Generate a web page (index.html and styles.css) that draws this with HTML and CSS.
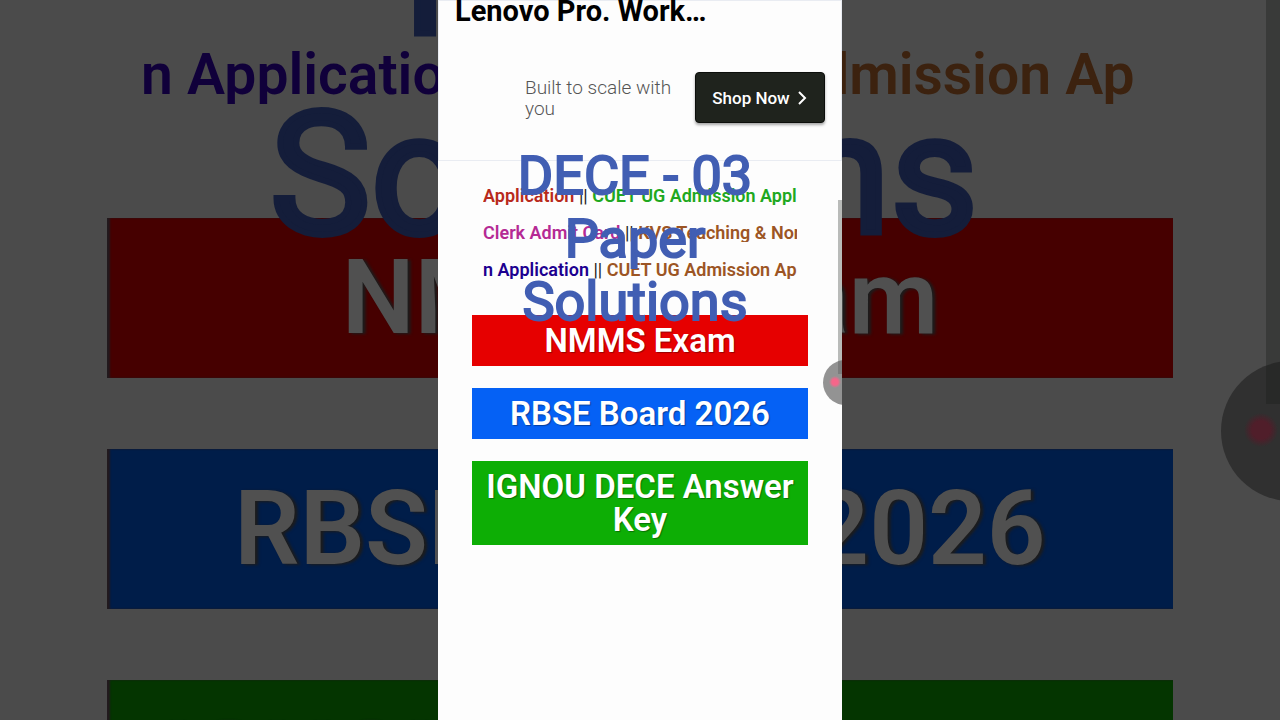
FILE: index.html
```
<!DOCTYPE html>
<html lang="en">
<head>
  <meta charset="UTF-8" />
  <meta name="viewport" content="width=device-width, initial-scale=1.0" />
  <title>DECE - 03 Paper Solutions</title>
  <link rel="stylesheet" href="styles.css">
</head>
<body>

  <!-- Dimmed enlarged backdrop -->
  <div class="backdrop" aria-hidden="true">
    <div class="big-ticker"><span class="navy">n Application</span> || <span class="brown">CUET UG Admission Ap</span></div>
    <div class="big-list">
      <div class="big-item red">NMMS Exam</div>
      <div class="big-item blue">RBSE Board 2026</div>
      <div class="big-item green">IGNOU DECE Answer Key</div>
    </div>
    <div class="big-caption">Paper<br>Solutions</div>
    <div class="big-scroll"></div>
    <div class="big-bubble"></div>
  </div>

  <!-- Phone screen -->
  <main class="phone">
    <section class="ad">
      <h2>Lenovo Pro. Work…</h2>
      <div class="ad-row">
        <p>Built to scale with you</p>
        <button class="shop-btn" type="button">Shop Now
          <svg width="10" height="16" viewBox="0 0 10 16" fill="none" stroke="#fff" stroke-width="2"><path d="M1 2l6 6-6 6" /></svg>
        </button>
      </div>
    </section>

    <section class="tickers">
      <div class="ticker"><a href="#" class="crimson">Application</a> || <a href="#" class="lime">CUET UG Admission Appl</a></div>
      <div class="ticker"><a href="#" class="magenta">Clerk Admit Card</a> || <a href="#" class="brown">KVS Teaching &amp; Non</a></div>
      <div class="ticker"><a href="#" class="navy">n Application</a> || <a href="#" class="brown">CUET UG Admission Ap</a></div>
    </section>

    <nav class="links">
      <a href="#" class="link red">NMMS Exam</a>
      <a href="#" class="link blue">RBSE Board 2026</a>
      <a href="#" class="link green">IGNOU DECE Answer Key</a>
    </nav>

    <h1 class="caption">DECE - 03<br>Paper<br>Solutions</h1>
    <div class="scroll"></div>
    <div class="bubble"></div>
  </main>

</body>
</html>
```
FILE: styles.css
```
* {
  box-sizing: border-box;
}

body {
  margin: 0;
  height: 100vh;
  overflow: hidden;
  position: relative;
  background: #4b4b4b;
  font-family: Roboto, "Liberation Sans", sans-serif;
  display: flex;
  justify-content: center;
}

a {
  color: inherit;
  text-decoration: none;
}

/* Backdrop */
.backdrop {
  position: absolute;
  inset: 0;
  overflow: hidden;
  padding-top: 46px;
}

.big-ticker {
  margin: 0 141px;
  font-size: 57px;
  line-height: 58px;
  font-weight: 600;
  white-space: nowrap;
  overflow: hidden;
}
.backdrop .navy { color: #10003a; }
.backdrop .brown { color: #3c220f; }

.big-list {
  margin: 114px 107px 0;
  display: flex;
  flex-direction: column;
  gap: 71px;
}

.big-item {
  padding: 28px 24px;
  color: #505050;
  font-size: 103px;
  line-height: 104px;
  font-weight: 600;
  text-align: center;
  text-shadow: 3px 1px 3px #1c1c1c;
  box-shadow: inset 3px 0 2px #221a1e;
}
.big-item.red { background: #460000; }
.big-item.blue { background: #001d49; }
.big-item.green { background: #043500; }

.big-caption {
  position: absolute;
  top: -123px;
  left: 0;
  right: 32px;
  color: #141d3a;
  font-size: 170px;
  line-height: 199px;
  font-weight: 400;
  text-align: center;
  -webkit-text-stroke: 6px #141d3a;
}

.big-scroll {
  position: absolute;
  top: 0;
  right: 0;
  width: 14px;
  height: 404px;
  background: #393a39;
}

.big-bubble {
  position: absolute;
  top: 361px;
  right: -81px;
  width: 140px;
  height: 140px;
  border-radius: 50%;
  background: radial-gradient(circle at 40px 69px, #501e2a 9px, rgba(80, 30, 42, 0) 17px), rgba(30, 30, 30, 0.6);
}

/* Phone screen */
.phone {
  position: relative;
  width: 404px;
  height: 100%;
  background: #fdfdfd;
  overflow: hidden;
}

.ad {
  border: 1px solid #e9ecf2;
}
.ad h2 {
  margin: 0 16px;
  font-size: 29px;
  line-height: 20px;
  font-weight: 700;
  color: #000;
}

.ad-row {
  display: flex;
  align-items: center;
  justify-content: space-between;
  padding: 51px 16px 37px 86px;
}
.ad-row p {
  margin: 0;
  width: 160px;
  font-size: 19px;
  line-height: 21px;
  font-weight: 300;
  color: #555;
}

.shop-btn {
  display: flex;
  align-items: center;
  justify-content: center;
  gap: 8px;
  width: 130px;
  height: 51px;
  padding: 0;
  border: 1px solid #0c0e0b;
  border-radius: 4px;
  background: #1f231d;
  color: #fff;
  font-family: inherit;
  font-size: 17px;
  font-weight: 500;
  box-shadow: 0 2px 3px rgba(0, 0, 0, 0.35);
  cursor: pointer;
}

.tickers {
  display: flex;
  flex-direction: column;
  gap: 19px;
  padding: 26px 45px 36px;
}
.ticker {
  font-size: 18px;
  line-height: 18px;
  color: #222;
  white-space: nowrap;
  overflow: hidden;
}
.ticker a { font-weight: 600; }
.crimson { color: #b82a1c; }
.lime { color: #20a820; }
.magenta { color: #b52a94; }
.brown { color: #9c5524; }
.navy { color: #1c0090; }

.links {
  display: flex;
  flex-direction: column;
  gap: 22px;
  margin: 0 34px;
}
.link {
  padding: 9px 8px;
  color: #fff;
  font-size: 33px;
  line-height: 33px;
  font-weight: 600;
  text-align: center;
  text-shadow: 1px 1px 1px rgba(0, 0, 0, 0.35);
}
.link.red { background: #e60000; }
.link.blue { background: #0561f5; }
.link.green { background: #0dae05; }

/* Caption over the page */
.caption {
  position: absolute;
  top: 144px;
  left: 0;
  right: 10px;
  margin: 0;
  color: #415eb3;
  font-size: 54px;
  line-height: 63px;
  font-weight: 400;
  text-align: center;
  -webkit-text-stroke: 2px #415eb3;
}

.scroll {
  position: absolute;
  top: 200px;
  right: 0;
  width: 4px;
  height: 174px;
  background: #b9bbb9;
}

.bubble {
  position: absolute;
  top: 360px;
  right: -26px;
  width: 45px;
  height: 45px;
  border-radius: 50%;
  background: radial-gradient(circle at 12px 22px, #f5668a 3px, rgba(245, 102, 138, 0) 6px), rgba(90, 90, 90, 0.65);
}
```
